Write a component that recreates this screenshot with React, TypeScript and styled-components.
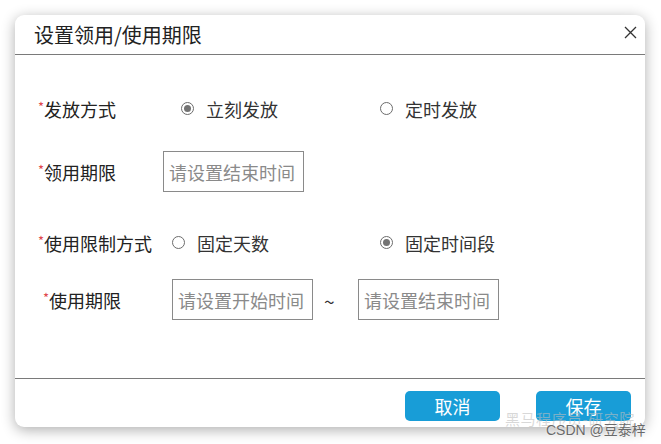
import React, { FC } from 'react';
import styled, { createGlobalStyle } from 'styled-components';

const GlobalStyle = createGlobalStyle`
  html, body {
    margin: 0;
    padding: 0;
    background: #fff;
  }
  body {
    font-family: "Noto Sans CJK SC", "Noto Sans", sans-serif;
    color: #222;
  }
`;

const Page = styled.div`
  position: relative;
  width: 661px;
  height: 444px;
  padding: 15px 0 0 15px;
  box-sizing: border-box;
`;

const Dialog = styled.div`
  width: 630px;
  height: 412px;
  display: flex;
  flex-direction: column;
  background: #fff;
  border-radius: 9px;
  box-shadow: 0 3px 14px rgba(0, 0, 0, 0.32);
  overflow: hidden;
`;

const Header = styled.div`
  height: 39px;
  display: flex;
  align-items: center;
  justify-content: space-between;
  padding: 0 8px 0 19px;
  border-bottom: 1px solid #7a7a7a;
`;

const Title = styled.h2`
  margin: 0;
  font-size: 20px;
  font-weight: 400;
  line-height: 1;
  color: #222;
`;

const CloseBtn = styled.button`
  border: 0;
  background: none;
  padding: 0;
  margin-bottom: 5px;
  width: 13px;
  height: 13px;
  display: flex;
  cursor: pointer;
`;

const Body = styled.div`
  flex: 1;
  display: flex;
  flex-direction: column;
  padding-left: 23px;
`;

const Row = styled.div<{ $gap: number }>`
  height: 41px;
  margin-top: ${(p) => p.$gap}px;
  display: flex;
  align-items: center;
`;

const Label = styled.div<{ $width: number; $indent?: number }>`
  width: ${(p) => p.$width}px;
  margin-left: ${(p) => p.$indent || 0}px;
  flex-shrink: 0;
  display: flex;
  align-items: center;
  font-size: 18px;
  line-height: 1;
  color: #222;
`;

const Star = styled.span`
  color: #e0474c;
  font-size: 13px;
  width: 6px;
  margin-bottom: 5px;
`;

const RadioOption = styled.label<{ $width?: number }>`
  width: ${(p) => (p.$width ? `${p.$width}px` : 'auto')};
  display: flex;
  align-items: center;
  gap: 12px;
  font-size: 18px;
  line-height: 1;
  color: #333;
  cursor: pointer;
`;

const RadioCircle = styled.span<{ $checked: boolean }>`
  width: 13px;
  height: 13px;
  box-sizing: border-box;
  border: 1px solid #6c6c6c;
  border-radius: 50%;
  display: flex;
  align-items: center;
  justify-content: center;
  &::after {
    content: '';
    width: 7px;
    height: 7px;
    border-radius: 50%;
    background: ${(p) => (p.$checked ? '#737373' : 'transparent')};
  }
`;

const Input = styled.input`
  width: 141px;
  height: 41px;
  box-sizing: border-box;
  border: 1px solid #8a8a8a;
  border-radius: 0;
  padding: 0 0 0 5px;
  font-family: "Noto Sans CJK SC", sans-serif;
  font-size: 18px;
  color: #333;
  outline: none;
  &::placeholder {
    color: #8a8a8a;
  }
`;

const Tilde = styled.span`
  width: 45px;
  box-sizing: border-box;
  padding: 2px 0 0 11px;
  font-size: 19px;
  color: #333;
`;

const Footer = styled.div`
  height: 49px;
  border-top: 1px solid #7a7a7a;
  display: flex;
  justify-content: flex-end;
  align-items: flex-start;
  gap: 36px;
  padding: 12px 14px 0 0;
  box-sizing: border-box;
`;

const Button = styled.button`
  width: 95px;
  height: 30px;
  border: 0;
  border-radius: 5px;
  background: #189dd7;
  color: #fff;
  font-family: "Noto Sans CJK SC", sans-serif;
  font-size: 18px;
  line-height: 1;
  cursor: pointer;
`;

const Watermark = styled.div`
  position: absolute;
  left: 505px;
  top: 408px;
  font-size: 15px;
  letter-spacing: 0.5px;
  color: rgba(190, 190, 190, 0.6);
  pointer-events: none;
`;

const Credit = styled.div`
  position: absolute;
  left: 546px;
  top: 419px;
  font-family: "Liberation Sans", "Noto Sans CJK SC", sans-serif;
  font-size: 14px;
  color: #6a6a6a;
  text-shadow: 0 0 2px #fff;
  pointer-events: none;
`;

interface IRadio {
  label: string;
  checked: boolean;
  width?: number;
}

const Radio: FC<IRadio> = ({ label, checked, width }) => (
  <RadioOption $width={width}>
    <RadioCircle $checked={checked} />
    <span>{label}</span>
  </RadioOption>
);

const App: FC = () => {
  return (
    <>
      <GlobalStyle />
      <Page>
        <Dialog>
          <Header>
            <Title>设置领用/使用期限</Title>
            <CloseBtn aria-label="关闭">
              <svg width="13" height="13" viewBox="0 0 13 13">
                <path d="M1 1 L12 12 M12 1 L1 12" stroke="#333" strokeWidth="1.3" fill="none" />
              </svg>
            </CloseBtn>
          </Header>
          <Body>
            <Row $gap={33}>
              <Label $width={143}>
                <Star>*</Star>发放方式
              </Label>
              <Radio label="立刻发放" checked width={199} />
              <Radio label="定时发放" checked={false} />
            </Row>
            <Row $gap={22}>
              <Label $width={125}>
                <Star>*</Star>领用期限
              </Label>
              <Input placeholder="请设置结束时间" />
            </Row>
            <Row $gap={30}>
              <Label $width={134}>
                <Star>*</Star>使用限制方式
              </Label>
              <Radio label="固定天数" checked={false} width={208} />
              <Radio label="固定时间段" checked />
            </Row>
            <Row $gap={16}>
              <Label $width={129} $indent={5}>
                <Star>*</Star>使用期限
              </Label>
              <Input placeholder="请设置开始时间" />
              <Tilde>~</Tilde>
              <Input placeholder="请设置结束时间" />
            </Row>
          </Body>
          <Footer>
            <Button>取消</Button>
            <Button>保存</Button>
          </Footer>
        </Dialog>
        <Watermark>黑马程序员-研究院</Watermark>
        <Credit>CSDN @豆泰梓</Credit>
      </Page>
    </>
  );
};

export default App;
